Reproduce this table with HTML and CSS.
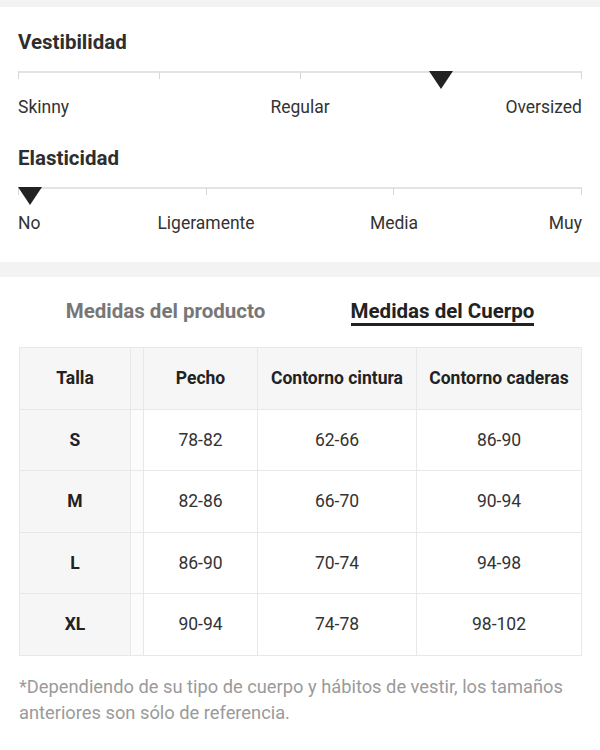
FILE: index.html
```html
<!DOCTYPE html>
<html lang="es">
<head>
<meta charset="utf-8">
<title>Medidas</title>
<link rel="stylesheet" href="styles.css">
</head>
<body>
<div class="band band-top"></div>
<section class="fit">
  <h2 class="fit-title">Vestibilidad</h2>
  <div class="scale">
    <div class="seg"></div><div class="seg"></div><div class="seg"></div><div class="seg"></div>
    <span class="marker" style="left: calc(75% - 12px)"></span>
  </div>
  <div class="labels labels-3">
    <span class="l-first">Skinny</span>
    <span class="l-mid">Regular</span>
    <span class="l-last">Oversized</span>
  </div>

  <h2 class="fit-title second">Elasticidad</h2>
  <div class="scale">
    <div class="seg"></div><div class="seg"></div><div class="seg"></div>
    <span class="marker" style="left: 0"></span>
  </div>
  <div class="labels labels-4">
    <span class="l-first">No</span>
    <span class="l-mid">Ligeramente</span>
    <span class="l-mid">Media</span>
    <span class="l-last">Muy</span>
  </div>
</section>
<div class="band band-mid"></div>
<section class="sizes">
  <div class="tabs">
    <div class="tab"><span class="tab-text">Medidas del producto</span></div>
    <div class="tab active"><span class="tab-text">Medidas del Cuerpo</span></div>
  </div>
  <table class="size-table">
    <colgroup>
      <col class="c-talla"><col class="c-gap"><col class="c-pecho"><col class="c-cintura"><col class="c-caderas">
    </colgroup>
    <thead>
      <tr><th class="talla">Talla</th><th class="gap"></th><th>Pecho</th><th>Contorno cintura</th><th>Contorno caderas</th></tr>
    </thead>
    <tbody>
      <tr><th class="talla">S</th><td class="gap"></td><td>78-82</td><td>62-66</td><td>86-90</td></tr>
      <tr><th class="talla">M</th><td class="gap"></td><td>82-86</td><td>66-70</td><td>90-94</td></tr>
      <tr><th class="talla">L</th><td class="gap"></td><td>86-90</td><td>70-74</td><td>94-98</td></tr>
      <tr><th class="talla">XL</th><td class="gap"></td><td>90-94</td><td>74-78</td><td>98-102</td></tr>
    </tbody>
  </table>
  <p class="note">*Dependiendo de su tipo de cuerpo y hábitos de vestir, los tamaños anteriores son sólo de referencia.</p>
</section>
</body>
</html>
```

FILE: styles.css
```css
* { box-sizing: border-box; }
html, body { margin: 0; padding: 0; background: #fff; }
body {
  width: 600px;
  font-family: Roboto, "Liberation Sans", Arial, sans-serif;
  color: #333;
}
.band { background: #f3f3f3; }
.band-top { height: 7px; }
.band-mid { height: 15px; }

.fit { padding: 20px 18px 29px; }
.fit-title {
  margin: 0;
  font-size: 20.5px;
  line-height: 30px;
  font-weight: 700;
  color: #2e2e2e;
}
.fit-title.second { margin-top: 26px; }

.scale {
  position: relative;
  display: flex;
  margin-top: 14px;
  height: 26px;
}
.seg {
  flex: 1;
  height: 8px;
  border-top: 2px solid #e3e3e3;
  border-left: 1px solid #d6d6d6;
}
.seg:last-of-type { border-right: 1px solid #d6d6d6; }
.marker {
  position: absolute;
  top: 0;
  width: 0;
  height: 0;
  border-left: 12px solid transparent;
  border-right: 12px solid transparent;
  border-top: 18px solid #222;
}

.labels {
  display: grid;
  font-size: 17.5px;
  line-height: 20px;
  color: #333;
}
.labels-3 { grid-template-columns: repeat(4, 1fr); }
.labels-4 { grid-template-columns: repeat(6, 1fr); }
.labels .l-first { text-align: left; white-space: nowrap; }
.labels .l-mid { grid-column: span 2; text-align: center; white-space: nowrap; }
.labels .l-last { text-align: right; white-space: nowrap; }

.sizes { padding: 0 19px 40px; }
.tabs {
  display: grid;
  grid-template-columns: 1fr 1fr;
  padding: 23px 0 0 8px;
}
.tab { text-align: center; }
.tab-text {
  display: inline-block;
  font-size: 20.5px;
  line-height: 23px;
  font-weight: 700;
  color: #777;
  border-bottom: 3px solid transparent;
}
.tab.active .tab-text { color: #222; border-bottom-color: #222; }

.size-table {
  margin-top: 21px;
  width: 562px;
  border-collapse: collapse;
  table-layout: fixed;
  border: 1px solid #e8e8e8;
}
.c-talla { width: 111px; }
.c-gap { width: 13px; }
.c-pecho { width: 114px; }
.c-cintura { width: 159px; }
.c-caderas { width: 165px; }
.size-table th, .size-table td {
  height: 61.5px;
  padding: 0;
  text-align: center;
  border: 1px solid #e8e8e8;
  font-size: 17.5px;
}
.size-table thead th {
  background: #f6f6f6;
  font-weight: 700;
  color: #222;
}
.size-table tbody td { color: #333; font-weight: 400; }
.size-table th.talla { background: #f6f6f6; font-weight: 700; color: #222; }
.size-table .gap { background: #fcfcfc; }
.size-table thead .gap { background: #f6f6f6; }

.note {
  margin: 18px 0 0;
  font-size: 18.3px;
  line-height: 26px;
  color: #9a9a9a;
}
```
